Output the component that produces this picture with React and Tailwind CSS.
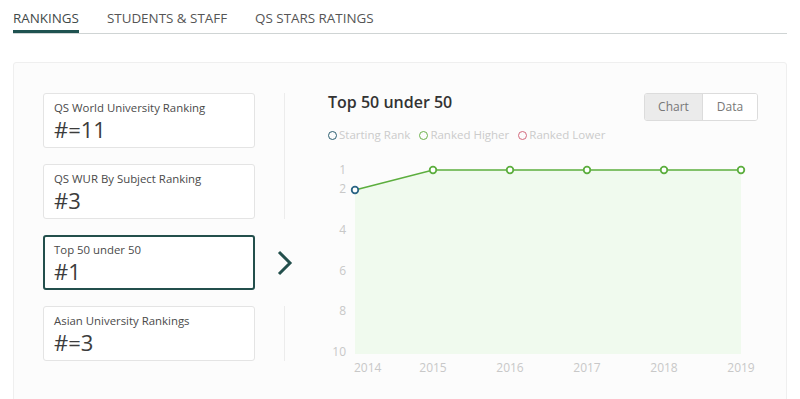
import React from "react";

const cards = [
  { label: "QS World University Ranking", value: "#=11" },
  { label: "QS WUR By Subject Ranking", value: "#3" },
  { label: "Top 50 under 50", value: "#1", active: true },
  { label: "Asian University Rankings", value: "#=3" },
];

function Chart() {
  const xs = [25, 103, 180, 257, 334, 411];
  const years = ["2014", "2015", "2016", "2017", "2018", "2019"];
  const ys = [31, 11, 11, 11, 11, 11];
  const yTicks = [
    ["1", 11],
    ["2", 30],
    ["4", 71],
    ["6", 112],
    ["8", 152],
    ["10", 193],
  ];
  const line = xs.map((x, i) => `${x},${ys[i]}`).join(" ");
  const area = `M25,${ys[0]} ` + xs.slice(1).map((x, i) => `L${x},${ys[i + 1]}`).join(" ") + ` L411,195 L25,195 Z`;
  return (
    <svg width="440" height="222" viewBox="0 0 440 222" className="block" style={{ fontFamily: "'Open Sans', sans-serif" }}>
      <path d={area} fill="#f0faee" />
      <polyline points={line} fill="none" stroke="#5cae3e" strokeWidth="1.6" />
      {yTicks.map(([t, y]) => (
        <text key={t} x="16" y={y + 4} textAnchor="end" fontSize="12" fill="#c8c8c8">{t}</text>
      ))}
      {years.map((yr, i) => (
        <text key={yr} x={i === 0 ? 24 : xs[i]} y="213" textAnchor={i === 0 ? "start" : "middle"} fontSize="12" fill="#c8c8c8">{yr}</text>
      ))}
      {xs.map((x, i) => (
        <circle key={x} cx={x} cy={ys[i]} r="3.3" fill="#fff" stroke={i === 0 ? "#2b6585" : "#5cae3e"} strokeWidth="1.8" />
      ))}
    </svg>
  );
}

export default function App() {
  return (
    <div className="w-[800px] h-[399px] overflow-hidden bg-white" style={{ fontFamily: "'Open Sans', sans-serif" }}>
      {/* Tabs */}
      <div className="mx-[13px] flex gap-[28px] border-b border-[#cfd4d4] h-[34px]">
        <div className="h-[33px] pt-[8px] text-[13.4px] leading-[20px] text-[#3f4a4a] border-b-[3px] border-[#1f5250] mb-[-1px]">RANKINGS</div>
        <div className="h-[33px] pt-[8px] text-[13.4px] leading-[20px] text-[#555]">STUDENTS &amp; STAFF</div>
        <div className="h-[33px] pt-[8px] text-[13.4px] leading-[20px] text-[#555]">QS STARS RATINGS</div>
      </div>

      {/* Card */}
      <div className="mx-[13px] mt-[28px] h-[360px] border border-[#efefef] rounded-[3px] bg-[#fcfcfc] flex pl-[29px] pt-[30px]">
        {/* Left list */}
        <div className="w-[212px] flex flex-col gap-[16px]">
          {cards.map((c) => (
            <div
              key={c.label}
              className={
                "h-[55px] rounded-[3px] bg-white px-[9px] pt-[5px] " +
                (c.active ? "border-2 border-[#234f4c]" : "border border-[#e4e4e4] pl-[10px] pt-[6px]")
              }
            >
              <div className="text-[11.4px] leading-[16px] text-[#4a4a4a]">{c.label}</div>
              <div className="text-[22px] leading-[26px] text-[#3c3c3c]">{c.value}</div>
            </div>
          ))}
        </div>

        {/* Divider column */}
        <div className="w-[73px] flex flex-col items-start pl-[29px]">
          <div className="w-px h-[126px] bg-[#ececec]" />
          <div className="h-[16px]" />
          <div className="h-[55px] flex items-center -ml-[8px]">
            <svg width="18" height="26" viewBox="0 0 18 26">
              <polyline points="3,2 14,13 3,24" fill="none" stroke="#234f4c" strokeWidth="3" />
            </svg>
          </div>
          <div className="h-[16px]" />
          <div className="w-px h-[55px] bg-[#ececec]" />
        </div>

        {/* Chart column */}
        <div className="w-[430px] flex flex-col">
          <div className="flex items-start justify-between">
            <div className="text-[16px] leading-[18px] font-semibold text-[#333]">Top 50 under 50</div>
            <div className="flex h-[28px] border border-[#dcdcdc] rounded-[3px] overflow-hidden text-[12px] text-[#777]">
              <div className="w-[58px] flex items-center justify-center bg-[#ebebeb] border-r border-[#dcdcdc]">Chart</div>
              <div className="w-[54px] flex items-center justify-center bg-white">Data</div>
            </div>
          </div>
          <div className="flex items-center gap-[9px] mt-[6px] text-[11.5px] leading-[16px] text-[#cbcbcb]">
            <div className="flex items-center gap-[2px]">
              <span className="w-[9px] h-[9px] rounded-full border-[1.5px] border-[#2d5f70]" />
              <span>Starting Rank</span>
            </div>
            <div className="flex items-center gap-[2px]">
              <span className="w-[9px] h-[9px] rounded-full border-[1.5px] border-[#6cb24c]" />
              <span>Ranked Higher</span>
            </div>
            <div className="flex items-center gap-[2px]">
              <span className="w-[9px] h-[9px] rounded-full border-[1.5px] border-[#d36a7d]" />
              <span>Ranked Lower</span>
            </div>
          </div>
          <div className="mt-[16px] ml-[2px]">
            <Chart />
          </div>
        </div>
      </div>
    </div>
  );
}
